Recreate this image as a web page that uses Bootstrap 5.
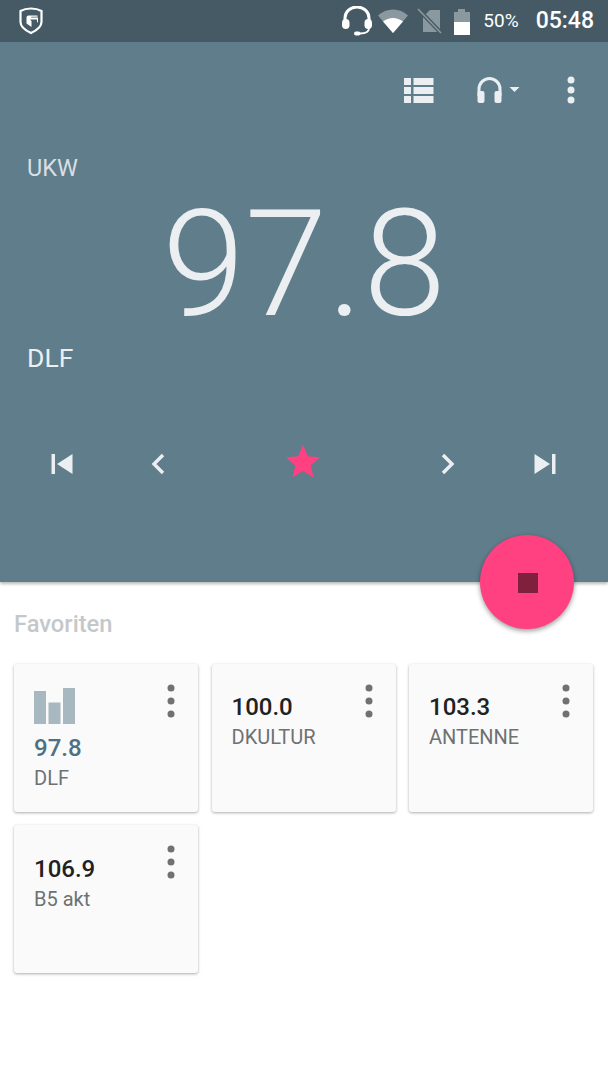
<!DOCTYPE html>
<html lang="de">
<head>
    <meta charset="UTF-8">
    <title>UKW Radio</title>
    <link href="https://cdn.jsdelivr.net/npm/bootstrap@5.3.0/dist/css/bootstrap.min.css" rel="stylesheet">
    <style>
        body {
            background-color: #fff;
            font-family: Roboto, "Liberation Sans", sans-serif;
            width: 608px;
            height: 1080px;
            overflow: hidden;
        }

        .status-strip {
            height: 42px;
            background-color: #465a65;
            color: #fff;
            padding: 0 14px 0 18px;
        }

        .status-pct { font-size: 19px; margin-left: 12px; margin-right: 17px; }
        .status-time { font-size: 23px; font-weight: 500; }

        .radio-panel {
            height: 540px;
            background-color: #607d8b;
            color: #eceff1;
            box-shadow: 0 2px 3px rgba(0,0,0,.28);
            padding-top: 28px;
        }

        .tool-row { height: 40px; padding-right: 33px; }
        .tool-phones { margin-left: 42px; }
        .tool-more { margin-left: 47px; }
        .band-label { font-size: 23.5px; line-height: 28px; margin: 0 0 0 27px; color: #d9dfe2; }
        .band-top { padding-top: 44px; }
        .freq-value {
            font-size: 149px;
            font-weight: 300;
            line-height: 150px;
            text-align: center;
            margin-top: 7px;
        }
        .band-bottom { margin-top: 5px; }
        .band-bottom .band-label { font-size: 26.500px; color: #eceff1; }
        .seek-row {
            display: grid;
            grid-template-columns: 96px 96px 194px 96px 98px;
            margin-top: 81px;
            padding-left: 14px;
            justify-items: center;
            align-items: start;
        }
        .seek-star { margin-top: -9px; }

        .fab-stop {
            position: absolute;
            left: 480px;
            top: 535px;
            width: 94px;
            height: 94px;
            border-radius: 50%;
            background-color: #ff4081;
            box-shadow: 0 2px 5px rgba(0,0,0,.4);
        }
        .fab-square { width: 20px; height: 20px; margin: 2px 0 0 2px; background-color: #80203f; }

        .fav-section { padding: 0 15px 0 14px; }
        .fav-title {
            font-size: 23.7px;
            font-weight: 500;
            color: #c5c8ca;
            line-height: 28px;
            margin: 28px 0 26px;
        }
        .fav-grid {
            display: grid;
            grid-template-columns: repeat(3, 184px);
            column-gap: 13.5px;
            row-gap: 13px;
        }
        .fav-card {
            position: relative;
            height: 148px;
            border: 0;
            border-radius: 3px;
            background-color: #fafafa;
            box-shadow: 0 1px 3px rgba(0,0,0,.33);
            padding: 27px 20px 0;
        }
        .fav-card.is-playing { padding-top: 24px; }
        .fav-freq { font-size: 24px; font-weight: 500; line-height: 32px; color: #212121; }
        .is-playing .fav-freq { color: #4d7083; line-height: 30px; margin-top: 9px; }
        .is-playing .fav-name { margin-top: 1px; }
        .fav-name { font-size: 20px; line-height: 28px; color: #6e7173; }
        .fav-more { position: absolute; top: 20px; right: 23px; }
        .fav-late { padding-top: 28px; }
    </style>
</head>
<body>

    <!-- Statusleiste -->
    <div class="status-strip d-flex align-items-center">
        <svg width="26" height="28" viewBox="0 0 26 28">
            <path d="M2.500 4C6 2 9 1.500 13 1.500S20 2 23.500 4V15c0 5-5 8.500-10.500 11C7.500 23.500 2.500 20 2.500 15Z" fill="none" stroke="#fff" stroke-width="2.200"/>
            <path d="M19.500 8.500h-9a2 2 0 0 0-2 2v6l5 3.500v-6l-1.500-1.500 7 0v3.500l1-1.500v-4h-7l.5-.8H19.500Z" fill="#fff"/>
        </svg>
        <div class="ms-auto d-flex align-items-center">
            <svg width="32" height="30" viewBox="0 0 32 30">
                <path d="M4 17v-5a12 11 0 0 1 24 0v5" fill="none" stroke="#fff" stroke-width="3"/>
                <rect x="1" y="13" width="7.500" height="10" rx="3.700" fill="#fff"/>
                <rect x="23.500" y="13" width="7.500" height="10" rx="3.700" fill="#fff"/>
                <path d="M28 22c0 4-4 5.500-9 5.500" fill="none" stroke="#fff" stroke-width="1.800"/>
                <rect x="13" y="25.500" width="6.500" height="4" rx="2" fill="#fff"/>
            </svg>
            <svg class="ms-1" width="32" height="26" viewBox="0 0 32 26">
                <path d="M1 7.500C9-.5 23-.5 31 7.500L16 25Z" fill="#8a989f"/>
                <path d="M6 13.500c6-4.800 14-4.800 20 0L16 25Z" fill="#fff"/>
            </svg>
            <svg class="ms-2" width="28" height="28" viewBox="0 0 28 28">
                <path d="M6 10l7-7h10v22H6Z" fill="#8a989f"/>
                <path d="M2 3l23 24" stroke="#465a65" stroke-width="4"/>
                <path d="M1 2l23 24" stroke="#8a989f" stroke-width="1.600"/>
            </svg>
            <svg class="ms-2" width="18" height="27" viewBox="0 0 18 27">
                <path d="M1 4h4V1h7v3h5v10H1Z" fill="#8a989f"/>
                <rect x="1" y="14" width="16" height="13" fill="#fff"/>
            </svg>
            <span class="status-pct">50%</span>
            <span class="status-time">05:48</span>
        </div>
    </div>

    <!-- Sender -->
    <div class="radio-panel">
        <div class="tool-row d-flex align-items-center justify-content-end">
            <svg width="30" height="26" viewBox="0 0 30 26" fill="#eceff1">
                <rect x="0" y="1" width="7" height="7"/><rect x="9.500" y="1" width="20" height="7"/>
                <rect x="0" y="10" width="7" height="7"/><rect x="9.500" y="10" width="20" height="7"/>
                <rect x="0" y="19" width="7" height="7"/><rect x="9.500" y="19" width="20" height="7"/>
            </svg>
            <svg class="tool-phones" width="44" height="28" viewBox="0 0 44 28">
                <path d="M3 20v-7a10.500 10.500 0 0 1 21 0v7" fill="none" stroke="#eceff1" stroke-width="3"/>
                <rect x="1.500" y="15" width="7" height="12" rx="2" fill="#eceff1"/>
                <rect x="18.500" y="15" width="7" height="12" rx="2" fill="#eceff1"/>
                <path d="M33.500 11h10l-5 5Z" fill="#eceff1"/>
            </svg>
            <svg class="tool-more" width="8" height="28" viewBox="0 0 8 28" fill="#eceff1">
                <circle cx="4" cy="4" r="3.500"/><circle cx="4" cy="14" r="3.500"/><circle cx="4" cy="24" r="3.500"/>
            </svg>
        </div>

        <div class="band-top"><p class="band-label">UKW</p></div>
        <div class="freq-value">97.8</div>
        <div class="band-bottom"><p class="band-label">DLF</p></div>

        <div class="seek-row">
            <svg width="24" height="22" viewBox="0 0 24 22" fill="#eceff1"><rect x="1.500" y="1" width="3.500" height="20"/><path d="M22.500 1v20L7 11Z"/></svg>
            <svg width="16" height="22" viewBox="0 0 16 22"><path d="M13 2 4 11l9 9" fill="none" stroke="#eceff1" stroke-width="3.400"/></svg>
            <svg class="seek-star" width="36" height="36" viewBox="1.500 1.500 21 21" fill="#ff4081"><path d="M12 17.270 18.180 21l-1.640-7.030L22 9.240l-7.190-.61L12 2 9.190 8.630 2 9.240l5.460 4.730L5.820 21z"/></svg>
            <svg width="16" height="22" viewBox="0 0 16 22"><path d="M3 2l9 9-9 9" fill="none" stroke="#eceff1" stroke-width="3.400"/></svg>
            <svg width="24" height="22" viewBox="0 0 24 22" fill="#eceff1"><path d="M1.500 1v20L17 11Z"/><rect x="19" y="1" width="3.500" height="20"/></svg>
        </div>
    </div>

    <button type="button" class="fab-stop btn p-0 border-0 d-flex align-items-center justify-content-center" aria-label="Stopp">
        <span class="fab-square"></span>
    </button>

    <!-- Favoriten -->
    <div class="fav-section">
        <h2 class="fav-title">Favoriten</h2>
        <div class="fav-grid">
            <div class="card fav-card is-playing">
                <svg width="41" height="36" viewBox="0 0 41 36" fill="#a8b8c0" class="d-block">
                    <rect x="0" y="3" width="12" height="33"/><rect x="14.500" y="14.500" width="12" height="21.500"/><rect x="29" y="0" width="12" height="36"/>
                </svg>
                <div class="fav-freq">97.8</div>
                <div class="fav-name">DLF</div>
                <svg class="fav-more" width="8" height="34" viewBox="0 0 8 34" fill="#717171"><circle cx="4" cy="4" r="3.500"/><circle cx="4" cy="17" r="3.500"/><circle cx="4" cy="30" r="3.500"/></svg>
            </div>
            <div class="card fav-card">
                <div class="fav-freq">100.0</div>
                <div class="fav-name">DKULTUR</div>
                <svg class="fav-more" width="8" height="34" viewBox="0 0 8 34" fill="#717171"><circle cx="4" cy="4" r="3.500"/><circle cx="4" cy="17" r="3.500"/><circle cx="4" cy="30" r="3.500"/></svg>
            </div>
            <div class="card fav-card">
                <div class="fav-freq">103.3</div>
                <div class="fav-name">ANTENNE</div>
                <svg class="fav-more" width="8" height="34" viewBox="0 0 8 34" fill="#717171"><circle cx="4" cy="4" r="3.500"/><circle cx="4" cy="17" r="3.500"/><circle cx="4" cy="30" r="3.500"/></svg>
            </div>
            <div class="card fav-card fav-late">
                <div class="fav-freq">106.9</div>
                <div class="fav-name">B5 akt</div>
                <svg class="fav-more" width="8" height="34" viewBox="0 0 8 34" fill="#717171"><circle cx="4" cy="4" r="3.500"/><circle cx="4" cy="17" r="3.500"/><circle cx="4" cy="30" r="3.500"/></svg>
            </div>
        </div>
    </div>

    <script src="https://cdn.jsdelivr.net/npm/bootstrap@5.3.0/dist/js/bootstrap.bundle.min.js"></script>
</body>
</html>
